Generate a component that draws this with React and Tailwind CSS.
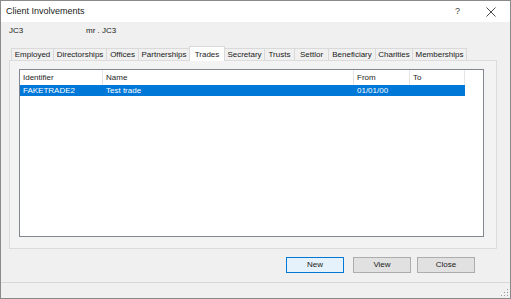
import React from "react";

const tabs = [
  ["Employed", 43],
  ["Directorships", 54],
  ["Offices", 33],
  ["Partnerships", 52],
  ["Trades", 36],
  ["Secretary", 41],
  ["Trusts", 31],
  ["Settlor", 35],
  ["Beneficiary", 48],
  ["Charities", 38],
  ["Memberships", 55],
];

export default function App() {
  return (
    <div
      className="w-[511px] h-[299px] border border-[#8a8a8a] bg-[#f0f0f0] flex flex-col text-[#1a1a1a] overflow-hidden"
      style={{ fontFamily: '"Liberation Sans", Arial, sans-serif' }}
    >
      {/* Title bar */}
      <div className="h-[21px] bg-white flex items-center shrink-0">
        <span className="pl-[5px] text-[9px] text-[#1a1a1a]">Client Involvements</span>
        <span className="ml-auto text-[9px] text-[#444] mr-[26px]">?</span>
        <svg width="10" height="10" viewBox="0 0 10 10" className="mr-[14px]">
          <path d="M0.5 0.5 L9.5 9.5 M9.5 0.5 L0.5 9.5" stroke="#333" strokeWidth="0.9" />
        </svg>
      </div>

      {/* Info row */}
      <div className="h-[18px] flex items-center pl-[8px] text-[8px] shrink-0">
        <span className="w-[77px]">JC3</span>
        <span>mr . JC3</span>
      </div>

      {/* Tabs */}
      <div className="mt-[7px] ml-[10px] h-[14px] flex items-end shrink-0 relative z-10">
        {tabs.map(([name, w], i) => {
          const sel = name === "Trades";
          return (
            <div
              key={name}
              style={{ width: w }}
              className={
                (i > 0 ? "-ml-px " : "") +
                (sel
                  ? "h-[15px] bg-white border-t border-l border-r border-[#d9d9d9] pt-[1px] relative z-10"
                  : "h-[12px] bg-[#f0f0f0] border-t border-l border-r border-[#d9d9d9] mb-px") +
                " flex items-center justify-center text-[8px] leading-none whitespace-nowrap"
              }
            >
              {name}
            </div>
          );
        })}
      </div>

      {/* Panel */}
      <div className="ml-[8px] w-[488px] h-[189px] border border-[#dcdcdc] bg-[#f3f3f3] -mt-px pt-[8px] pl-[9px] pr-[12px] pb-[11px] shrink-0 flex">
        <div className="flex-1 border border-[#828790] bg-white flex flex-col">
          <div className="h-[15px] flex text-[8px] text-[#1e1e1e] items-center">
            <div className="w-[83px] h-full flex items-center pl-[3px] border-r border-[#e5e5e5]">Identifier</div>
            <div className="w-[251px] h-full flex items-center pl-[3px] border-r border-[#e5e5e5]">Name</div>
            <div className="w-[56px] h-full flex items-center pl-[3px] border-r border-[#e5e5e5]">From</div>
            <div className="w-[55px] h-full flex items-center pl-[3px] border-r border-[#e5e5e5]">To</div>
          </div>
          <div className="h-[11px] w-[445px] bg-[#0078d7] flex items-center text-[8px] text-white">
            <div className="w-[83px] pl-[3px]">FAKETRADE2</div>
            <div className="w-[251px] pl-[3px]">Test trade</div>
            <div className="w-[56px] pl-[3px]">01/01/00</div>
            <div className="w-[55px]"></div>
          </div>
        </div>
      </div>

      {/* Buttons */}
      <div className="mt-[8px] h-[16px] flex shrink-0 text-[8px]">
        <div className="ml-[285px] w-[58px] h-full border border-[#0078d7] bg-[#e5f1fb] flex items-center justify-center">New</div>
        <div className="ml-[9px] w-[58px] h-full border border-[#adadad] bg-[#e1e1e1] flex items-center justify-center">View</div>
        <div className="ml-[6px] w-[58px] h-full border border-[#adadad] bg-[#e1e1e1] flex items-center justify-center">Close</div>
      </div>

      {/* Status bar */}
      <div className="mt-[9px] border-t border-[#d7d7d7] flex-1 flex items-end justify-end">
        <svg width="8" height="8" viewBox="0 0 8 8" className="mb-px mr-px">
          <rect x="6" y="0" width="1" height="1" fill="#9a9a9a" />
          <rect x="3" y="3" width="1" height="1" fill="#9a9a9a" />
          <rect x="6" y="3" width="1" height="1" fill="#9a9a9a" />
          <rect x="0" y="6" width="1" height="1" fill="#9a9a9a" />
          <rect x="3" y="6" width="1" height="1" fill="#9a9a9a" />
          <rect x="6" y="6" width="1" height="1" fill="#9a9a9a" />
        </svg>
      </div>
    </div>
  );
}
